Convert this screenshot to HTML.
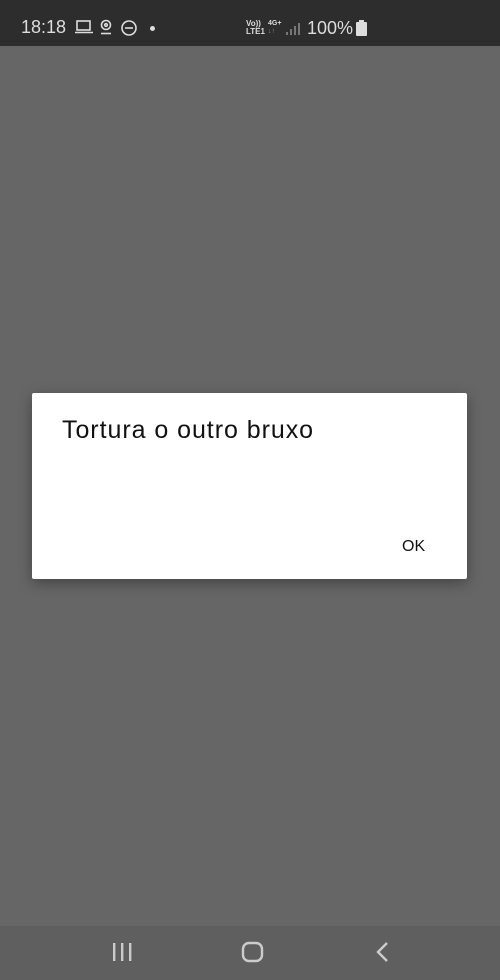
<!DOCTYPE html>
<html><head><meta charset="utf-8"><style>
body{margin:0;width:500px;height:980px;background:#666;position:relative;overflow:hidden;font-family:"Liberation Sans",sans-serif}
.sb{position:absolute;top:0;left:0;width:500px;height:46px;background:#2d2d2d;color:#ddd}
.nav{position:absolute;top:926px;left:0;width:500px;height:54px;background:#5f5f5f}
.dlg{position:absolute;left:32px;top:393px;width:435px;height:186px;background:#fff;border-radius:2px;box-shadow:0 4px 14px rgba(0,0,0,.35)}
.t{position:absolute;left:30px;top:23px;font-size:25px;letter-spacing:0.95px;color:#111}
.ok{position:absolute;left:370px;top:145px;font-size:16px;color:#111}
</style></head><body>
<div class="sb">
<div style="position:absolute;left:21px;top:17px;font-size:18px">18:18</div>
<svg style="position:absolute;left:74px;top:19px" width="20" height="16" viewBox="0 0 20 16" fill="none" stroke="#ddd" stroke-width="1.6"><rect x="3" y="2" width="13" height="9"/><path d="M1 13.5H19"/></svg>
<svg style="position:absolute;left:99px;top:19px" width="14" height="16" viewBox="0 0 14 16" fill="none" stroke="#ddd" stroke-width="1.6"><circle cx="7" cy="6" r="4.5"/><circle cx="7" cy="6" r="1.3"/><path d="M2 14.5H12"/></svg>
<svg style="position:absolute;left:121px;top:20px" width="18" height="18" viewBox="0 0 18 18" fill="none" stroke="#ddd" stroke-width="1.6"><circle cx="8" cy="8" r="7"/><path d="M4 8H12"/></svg>
<div style="position:absolute;left:150px;top:26px;width:5px;height:5px;border-radius:50%;background:#ddd"></div>
<div style="position:absolute;left:246px;top:20px;font-size:8px;line-height:8px;font-weight:bold">Vo))<br>LTE1</div>
<div style="position:absolute;left:268px;top:20px;font-size:7px;line-height:8px;font-weight:bold">4G+<br><span style="color:#888">↓↑</span></div>
<svg style="position:absolute;left:286px;top:22px" width="14" height="13" viewBox="0 0 14 13" fill="#777"><rect x="0" y="10" width="2" height="3"/><rect x="4" y="7" width="2" height="6"/><rect x="8" y="4" width="2" height="9"/><rect x="12" y="1" width="2" height="12"/></svg>
<div style="position:absolute;left:307px;top:18px;font-size:18px">100%</div>
<svg style="position:absolute;left:356px;top:20px" width="11" height="16" viewBox="0 0 11 16" fill="#ddd"><rect x="3" y="0" width="5" height="2"/><rect x="0" y="2" width="11" height="14" rx="1"/></svg>
</div>
<div class="dlg"><div class="t">Tortura o outro bruxo</div><div class="ok">OK</div></div>
<div class="nav">
<svg style="position:absolute;left:112px;top:17px" width="22" height="20" fill="#ccc"><rect x="1" y="0" width="2.4" height="18"/><rect x="9" y="0" width="2.4" height="18"/><rect x="17" y="0" width="2.4" height="18"/></svg>
<svg style="position:absolute;left:241px;top:15px" width="24" height="24" fill="none" stroke="#ccc" stroke-width="2.4"><rect x="2" y="2" width="19" height="18" rx="6"/></svg>
<svg style="position:absolute;left:374px;top:15px" width="16" height="24" fill="none" stroke="#ccc" stroke-width="2.4"><path d="M13 2L4 11L13 20"/></svg>
</div>
</body></html>
